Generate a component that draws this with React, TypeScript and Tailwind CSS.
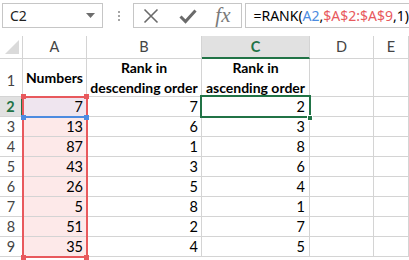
import React from 'react'

const nums = [7, 13, 87, 43, 26, 5, 51, 35]
const desc = [7, 6, 1, 3, 5, 8, 2, 4]
const asc = [2, 3, 8, 6, 4, 1, 7, 5]

const cell = 'border-r border-b border-[#d4d4d4]'

export default function App() {
  return (
    <div className="relative w-[409px] h-[260px] overflow-hidden bg-white font-['Lato',sans-serif] text-[15px] text-black">
      {/* formula bar */}
      <div className="flex items-center h-[36px] pt-[3px] pb-[8px] pl-[2px] font-['Noto_Sans',sans-serif]">
        <div className="flex items-center justify-between w-[102px] h-[25px] border border-[#c6c6c6] pl-[7px] pr-[7px] text-[14px] text-[#222]">
          <span>C2</span>
          <svg width="9" height="5" viewBox="0 0 9 5"><path d="M0 0h9L4.5 5z" fill="#6d6d6d" /></svg>
        </div>
        <div className="flex flex-col gap-[2px] ml-[15px] mr-[13px]">
          <span className="w-[2px] h-[2px] bg-[#a6a6a6]" />
          <span className="w-[2px] h-[2px] bg-[#a6a6a6]" />
          <span className="w-[2px] h-[2px] bg-[#a6a6a6]" />
        </div>
        <div className="flex items-center w-[110px] h-[25px] border border-[#c6c6c6]">
          <svg className="ml-[9px]" width="16" height="16" viewBox="0 0 16 16">
            <path d="M1.5 1.5l13 13M14.5 1.5l-13 13" stroke="#6a6a6a" strokeWidth="1.6" fill="none" />
          </svg>
          <svg className="ml-[20px]" width="18" height="16" viewBox="0 0 18 16">
            <path d="M1.5 8.5l5 5L16.5 2.5" stroke="#6a6a6a" strokeWidth="3" fill="none" strokeLinejoin="miter" />
          </svg>
          <span className="ml-[18px] font-['Liberation_Serif',serif] italic text-[21px] leading-none text-[#7a7a7a]">fx</span>
        </div>
        <div className="flex items-center flex-1 h-[25px] ml-[3px] border border-[#c6c6c6] border-r-0 pl-[7px] text-[14px] whitespace-nowrap">
          <span>=RANK(</span>
          <span className="text-[#4c8be0]">A2</span>
          <span>,</span>
          <span className="text-[#e8595d]">$A$2:$A$9</span>
          <span>,1)</span>
        </div>
      </div>

      {/* sheet */}
      <div className="grid grid-cols-[23px_64px_115px_108px_64px_1fr] grid-rows-[23px_38px_repeat(8,20px)] text-[14.5px] whitespace-nowrap">
        <div className={`${cell} relative`}>
          <svg className="absolute left-[5px] top-[4px]" width="14" height="14" viewBox="0 0 14 14"><path d="M14 0v14H0z" fill="#dadada" /></svg>
        </div>
        {['A', 'B', 'C', 'D', 'E'].map((c) =>
          c === 'C' ? (
            <div key={c} className="flex items-center justify-center bg-[#e1e1e1] border-r border-[#d4d4d4] border-b-2 border-b-[#217346] text-[#217346] font-bold">
              {c}
            </div>
          ) : (
            <div key={c} className={`${cell} flex items-center justify-center text-[#444]`}>
              {c}
            </div>
          )
        )}

        <div className={`${cell} flex items-end justify-center pb-[4px] text-[#444]`}>1</div>
        <div className={`${cell} flex items-center justify-center font-bold text-[14px]`}>Numbers</div>
        <div className={`${cell} flex flex-col items-center justify-center font-bold text-[14px] leading-[20px]`}>
          <span>Rank in</span>
          <span>descending order</span>
        </div>
        <div className={`${cell} flex flex-col items-center justify-center font-bold text-[14px] leading-[20px]`}>
          <span>Rank in</span>
          <span>ascending order</span>
        </div>
        <div className={cell} />
        <div className={cell} />

        {nums.map((n, i) => {
          const sel = i === 0
          return (
            <React.Fragment key={i}>
              <div
                className={
                  sel
                    ? 'flex items-center justify-center bg-[#e1e1e1] border-b border-[#d4d4d4] border-r-2 border-r-[#217346] text-[#217346] font-bold'
                    : `${cell} flex items-center justify-center text-[#444]`
                }
              >
                {i + 2}
              </div>
              <div className={`${cell} flex items-center justify-end pr-[3px] ${sel ? 'bg-[#efe5ef]' : 'bg-[#fde9e9]'}`}>{n}</div>
              <div className={`${cell} flex items-center justify-end pr-[3px]`}>{desc[i]}</div>
              <div className={`${cell} flex items-center justify-end pr-[4px]`}>{asc[i]}</div>
              <div className={cell} />
              <div className={cell} />
            </React.Fragment>
          )
        })}
      </div>

      {/* range highlight $A$2:$A$9 */}
      <div className="absolute left-[22px] top-[96px] w-[66px] h-[162px] border-2 border-[#e8595d] pointer-events-none" />
      {/* range highlight A2 */}
      <div className="absolute left-[24px] top-[116px] w-[62px] h-[2px] bg-[#4c8be0]" />
      <span className="absolute left-[21px] top-[94px] w-[5px] h-[5px] bg-[#e8595d]" />
      <span className="absolute left-[84px] top-[94px] w-[5px] h-[5px] bg-[#e8595d]" />
      <span className="absolute left-[21px] top-[115px] w-[5px] h-[5px] bg-[#4c8be0]" />
      <span className="absolute left-[84px] top-[115px] w-[5px] h-[5px] bg-[#4c8be0]" />
      <span className="absolute left-[21px] top-[255px] w-[5px] h-[5px] bg-[#e8595d]" />
      <span className="absolute left-[84px] top-[255px] w-[5px] h-[5px] bg-[#e8595d]" />

      {/* active cell C2 */}
      <div className="absolute left-[200px] top-[95px] w-[111px] h-[23px] border-2 border-[#217346]" />
      <span className="absolute left-[307px] top-[115px] w-[6px] h-[6px] bg-[#217346] border border-white" />
    </div>
  )
}
